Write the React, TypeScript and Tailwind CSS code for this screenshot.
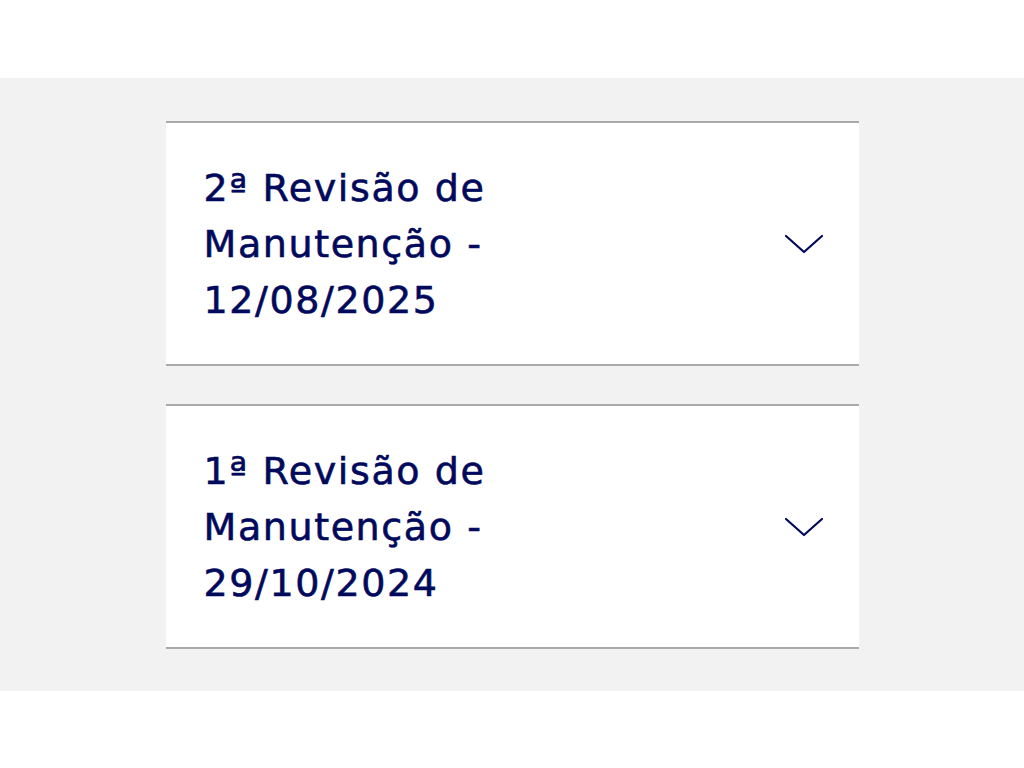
import { useState } from "react";

const REVISIONS = [
  { title: "2ª Revisão de Manutenção - 12/08/2025" },
  { title: "1ª Revisão de Manutenção - 29/10/2024" },
];

function ChevronDown() {
  return (
    <svg width="40" height="20" viewBox="0 0 40 20" fill="none">
      <path d="M2 2 L20 18 L38 2" stroke="#00095b" strokeWidth="2.2" strokeLinecap="round" strokeLinejoin="round" />
    </svg>
  );
}

export default function App() {
  const [open, setOpen] = useState<number | null>(null);

  return (
    <div className="min-h-[768px] bg-white font-['DejaVu_Sans',sans-serif]">
      <div className="h-[78px]" />
      <section className="bg-[#f2f2f2] pt-[43px] pb-[42px]">
        <div className="mx-auto flex w-[693px] flex-col gap-[38px]">
          {REVISIONS.map(({ title }, i) => (
            <div key={title} className="border-y-2 border-[#a9a9a9] bg-white">
              <button
                onClick={() => setOpen(open === i ? null : i)}
                className="flex w-full items-center justify-between pt-[37px] pb-[36px] pl-[38px] pr-[35px] text-left"
              >
                <span className="w-[330px] text-[38px] leading-[56px] tracking-[1.6px] text-[#00095b] [-webkit-text-stroke:0.6px_#00095b]">
                  {title}
                </span>
                <ChevronDown />
              </button>
            </div>
          ))}
        </div>
      </section>
    </div>
  );
}
